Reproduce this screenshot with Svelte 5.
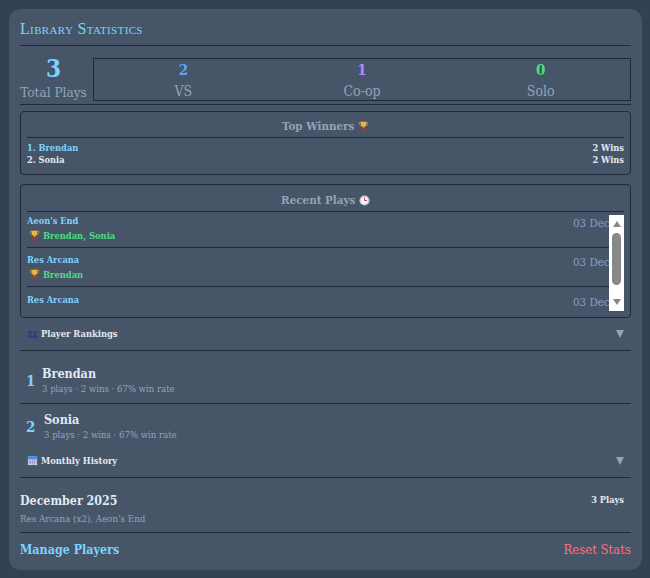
<script>
  import { onMount } from 'svelte';

  let list;

  const modes = [
    { label: 'VS', value: 2, color: '#60a5fa' },
    { label: 'Co-op', value: 1, color: '#c084fc' },
    { label: 'Solo', value: 0, color: '#4ade80' }
  ];
  const winners = [
    { name: '1. Brendan', wins: '2 Wins', first: true },
    { name: '2. Sonia', wins: '2 Wins', first: false }
  ];
  const plays = [
    { game: "Aeon's End", date: '03 Dec', winner: 'Brendan, Sonia' },
    { game: 'Res Arcana', date: '03 Dec', winner: 'Brendan' },
    { game: 'Res Arcana', date: '03 Dec', winner: null }
  ];
  const players = [
    { rank: 1, name: 'Brendan', meta: '3 plays · 2 wins · 67% win rate', w: 6 },
    { rank: 2, name: 'Sonia', meta: '3 plays · 2 wins · 67% win rate', w: 8 }
  ];

  onMount(() => {
    list.scrollTop = 6;
  });
</script>

{#snippet trophy()}
  <svg class="emoji" viewBox="0 0 12 12">
    <path d="M1.5 1.5h9v1.6c0 1.2-.9 2-2.2 2.1l-1 .1h-2.6l-1-.1C2.400 5.100 1.500 4.300 1.500 3.100z" fill="none" stroke="#d99a2b" stroke-width=".9"/>
    <path d="M3 .8h6v2.700c0 1.800-1.300 3-3 3s-3-1.200-3-3z" fill="#f2b33d"/>
    <rect x="5.300" y="6.200" width="1.400" height="2" fill="#d08a26"/>
    <rect x="2.700" y="8.200" width="6.600" height="3.300" fill="#8a3f4e"/>
  </svg>
{/snippet}

{#snippet clock()}
  <svg class="emoji" viewBox="0 0 12 12">
    <circle cx="6" cy="6" r="5.500" fill="#c9ccd4"/>
    <circle cx="6" cy="6" r="3.900" fill="#f4f4f6"/>
    <path d="M6 2.900V6h2.800" fill="none" stroke="#b8355c" stroke-width="1"/>
  </svg>
{/snippet}

{#snippet people()}
  <svg class="emoji" viewBox="0 0 12 12">
    <g fill="#4c2f82">
      <circle cx="3.200" cy="5" r="1.900"/>
      <circle cx="8.800" cy="5" r="1.900"/>
      <path d="M.4 11c0-2.400 1.100-3.800 2.800-3.800S6 8.600 6 11zM6 11c0-2.400 1.100-3.800 2.800-3.800s2.800 1.400 2.800 3.800z"/>
    </g>
  </svg>
{/snippet}

{#snippet calendar()}
  <svg class="emoji" viewBox="0 0 12 12">
    <rect x="1" y="1.500" width="10" height="9.500" fill="#d9d6ea"/>
    <rect x="1" y="1.500" width="10" height="3.200" fill="#3f8fe0"/>
    <path d="M1 6.500h10M1 8.500h10M3.500 4.700V11M6 4.700V11M8.500 4.700V11" stroke="#8f84bd" stroke-width=".7"/>
  </svg>
{/snippet}

<div class="card">
  <h2 class="title">Library Statistics</h2>

  <div class="stats">
    <div class="total">
      <div class="total-num">3</div>
      <div class="total-label">Total Plays</div>
    </div>
    <div class="modes">
      {#each modes as m}
        <div class="mode">
          <div class="mode-num" style:color={m.color}>{m.value}</div>
          <div class="mode-label">{m.label}</div>
        </div>
      {/each}
    </div>
  </div>

  <section class="box winners">
    <h3 class="box-head">Top Winners {@render trophy()}</h3>
    {#each winners as w}
      <div class="winner" class:first={w.first}>
        <span>{w.name}</span>
        <span class="wins">{w.wins}</span>
      </div>
    {/each}
  </section>

  <section class="box recent">
    <h3 class="box-head">Recent Plays {@render clock()}</h3>
    <div class="list-wrap">
      <div class="list" bind:this={list}>
        {#each plays as p}
          <div class="play">
            <div class="play-main">
              <div class="game">{p.game}</div>
              {#if p.winner}
                <div class="play-winner">{@render trophy()} {p.winner}</div>
              {/if}
            </div>
            <div class="date">{p.date}</div>
          </div>
        {/each}
      </div>
      <div class="scrollbar">
        <span class="arrow-up"></span>
        <span class="thumb"></span>
        <span class="arrow-down"></span>
      </div>
    </div>
  </section>

  <div class="toggle first-toggle">
    <span class="toggle-name">{@render people()} Player Rankings</span>
    <span class="caret"></span>
  </div>

  {#each players as p, i}
    <div class="player" class:ruled={i === 0}>
      <div class="rank" style:width="{p.w}px">{p.rank}</div>
      <div>
        <div class="player-name">{p.name}</div>
        <div class="meta">{p.meta}</div>
      </div>
    </div>
  {/each}

  <div class="toggle">
    <span class="toggle-name">{@render calendar()} Monthly History</span>
    <span class="caret"></span>
  </div>

  <div class="month">
    <div>
      <div class="month-name">December 2025</div>
      <div class="month-games">Res Arcana (x2), Aeon's End</div>
    </div>
    <div class="month-plays">3 Plays</div>
  </div>

  <div class="foot">
    <span class="manage">Manage Players</span>
    <span class="reset">Reset Stats</span>
  </div>
</div>

<style>
  :global(body) {
    background: #334155;
    font-family: "DejaVu Serif Condensed", "DejaVu Serif", serif;
  }
  .card {
    margin: 9px 8px 8px 9px;
    padding: 8px 11px 11px;
    background: #475569;
    border-radius: 12px;
    height: 542px;
  }
  .title {
    margin: 0;
    padding: 2px 0 7px;
    font: normal 16px/19px "Liberation Serif", serif;
    font-variant: small-caps;
    letter-spacing: 0.35px;
    color: #7dd3fc;
    border-bottom: 1px solid #1e293b;
  }
  .stats {
    display: flex;
    gap: 6px;
    margin-top: 12px;
    padding-bottom: 3px;
    border-bottom: 1px solid #1e293b;
    height: 43px;
  }
  .total {
    text-align: center;
    width: 67px;
  }
  .total-num {
    font-size: 24px;
    line-height: 22px;
    font-weight: bold;
    color: #7dd3fc;
  }
  .total-label {
    font-size: 13.500px;
    line-height: 24px;
    color: #94a3b8;
    white-space: nowrap;
  }
  .modes {
    flex: 1;
    display: grid;
    grid-template-columns: repeat(3, 1fr);
    border: 1px solid #1e293b;
    text-align: center;
  }
  .mode-num {
    font-size: 15px;
    line-height: 22px;
    font-weight: bold;
  }
  .mode-label {
    font-size: 14px;
    line-height: 20px;
    color: #94a3b8;
  }
  .box {
    border: 1px solid #1e293b;
    border-radius: 4px;
    padding: 0 6px;
  }
  .winners {
    margin-top: 6px;
    height: 64px;
    box-sizing: border-box;
  }
  .box-head {
    margin: 0;
    height: 25px;
    font-size: 11.500px;
    font-weight: bold;
    line-height: 28px;
    text-align: center;
    color: #94a3b8;
    border-bottom: 1px solid #1e293b;
  }
  .recent .box-head {
    height: 26px;
    line-height: 30px;
  }
  .emoji {
    display: inline-block;
    width: 11px;
    height: 11px;
    vertical-align: -2px;
  }
  .winner {
    display: flex;
    justify-content: space-between;
    font-size: 9.200px;
    line-height: 12px;
    font-weight: bold;
    color: #e2e8f0;
  }
  .winners .winner.first {
    margin-top: 4px;
    color: #7dd3fc;
  }
  .wins {
    color: #e2e8f0;
  }
  .recent {
    margin-top: 9px;
    height: 134px;
    box-sizing: border-box;
  }
  .list-wrap {
    position: relative;
    margin-top: 3px;
    height: 96px;
  }
  .list {
    height: 96px;
    overflow: hidden;
  }
  .scrollbar {
    position: absolute;
    top: 0;
    right: 0;
    width: 15px;
    height: 96px;
    background: #fff;
    display: flex;
    flex-direction: column;
    align-items: center;
  }
  .arrow-up, .arrow-down {
    width: 0;
    height: 0;
    border-left: 4.500px solid transparent;
    border-right: 4.500px solid transparent;
  }
  .arrow-up {
    margin-top: 6px;
    border-bottom: 6px solid #888;
  }
  .thumb {
    width: 9px;
    height: 52px;
    margin-top: 6px;
    border-radius: 4.500px;
    background: #888;
  }
  .arrow-down {
    margin-top: 14px;
    border-top: 6px solid #888;
  }
  .play {
    display: flex;
    justify-content: space-between;
    height: 38px;
    border-bottom: 1px solid #1e293b;
  }
  .play:last-child {
    border-bottom: 0;
    height: 45px;
  }
  .game {
    margin-top: 6px;
    font-size: 9.200px;
    line-height: 12px;
    font-weight: bold;
    color: #7dd3fc;
  }
  .play:last-child .game {
    margin-top: 7px;
  }
  .play-winner {
    margin-top: 1px;
    font-size: 9.300px;
    line-height: 16px;
    font-weight: bold;
    color: #4ade80;
    padding-left: 2px;
  }
  .date {
    margin-top: 7px;
    width: 51px;
    font-size: 11.500px;
    line-height: 14px;
    color: #86a0c4;
  }
  .play:last-child .date {
    margin-top: 8px;
  }
  .toggle {
    display: flex;
    justify-content: space-between;
    align-items: center;
    line-height: 14px;
    padding: 4px 7px 9px;
    border-bottom: 1px solid #1e293b;
  }
  .first-toggle {
    padding-top: 9px;
  }
  .toggle-name {
    font-size: 9.300px;
    font-weight: bold;
    color: #e2e8f0;
  }
  .caret {
    width: 0;
    height: 0;
    border-left: 4px solid transparent;
    border-right: 4px solid transparent;
    border-top: 8px solid #94a3b8;
  }
  .player {
    display: flex;
    align-items: center;
    gap: 10px;
    padding: 0 6px;
    height: 46px;
  }
  .ruled {
    height: 45px;
    padding-top: 7px;
    border-bottom: 1px solid #1e293b;
  }
  .rank {
    font-size: 15px;
    font-weight: bold;
    color: #7dd3fc;
  }
  .player-name {
    font-size: 12.500px;
    line-height: 15px;
    font-weight: bold;
    color: #e2e8f0;
  }
  .meta {
    font-size: 9.500px;
    line-height: 15px;
    color: #94a3b8;
  }
  .month {
    display: flex;
    justify-content: space-between;
    height: 55px;
    box-sizing: border-box;
    padding-top: 14px;
    border-bottom: 1px solid #1e293b;
  }
  .month-name {
    font-size: 12.300px;
    line-height: 18px;
    font-weight: bold;
    color: #e2e8f0;
    margin-bottom: 2px;
  }
  .month-games {
    font-size: 9.700px;
    line-height: 14px;
    color: #94a3b8;
  }
  .month-plays {
    margin-top: 1px;
    font-size: 9.200px;
    line-height: 14px;
    font-weight: bold;
    color: #e2e8f0;
    padding-right: 7px;
  }
  .foot {
    display: flex;
    justify-content: space-between;
    align-items: center;
    height: 33px;
  }
  .manage {
    font-size: 12.400px;
    font-weight: bold;
    color: #7dd3fc;
  }
  .reset {
    font-size: 13px;
    color: #fb7185;
  }
</style>
